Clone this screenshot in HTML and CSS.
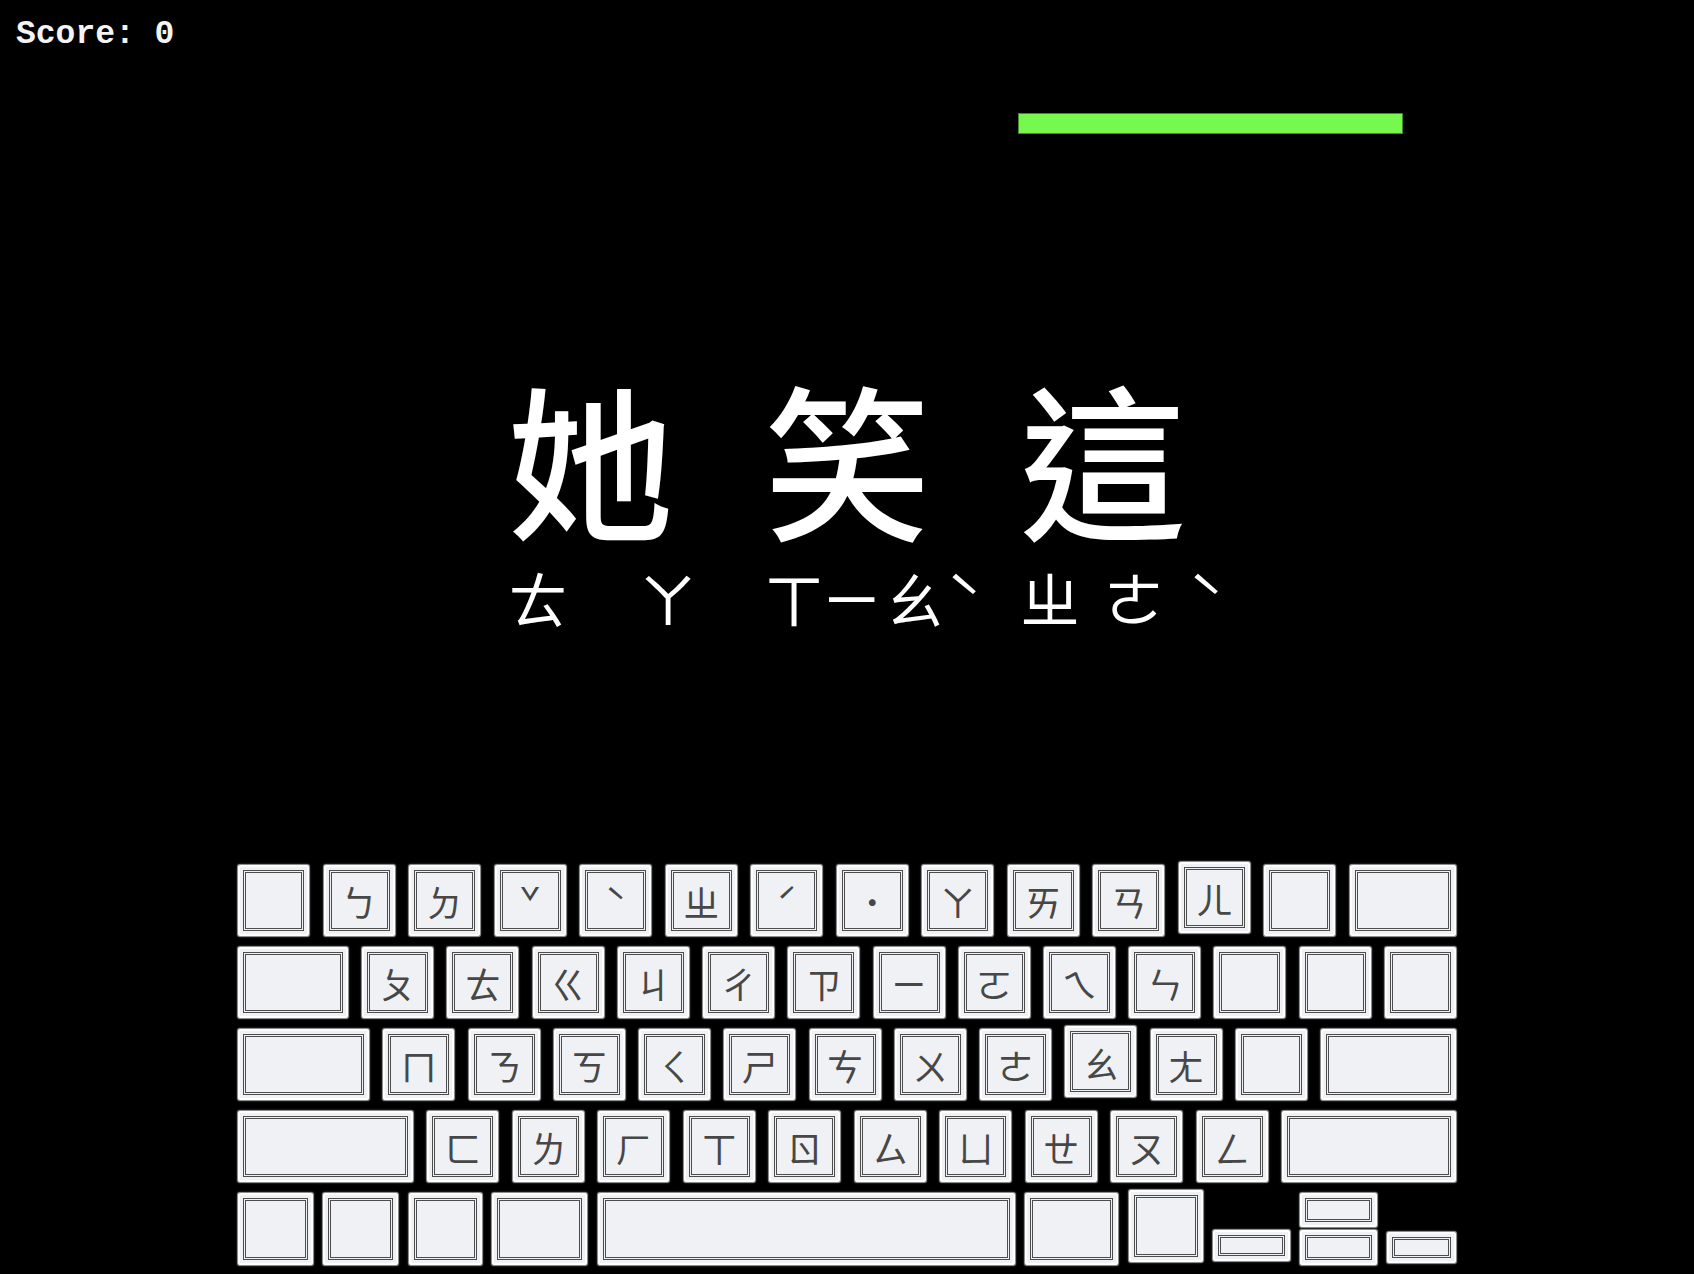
FILE: index.html
```html
<!DOCTYPE html>
<html lang="zh-Hant">
<head>
<meta charset="utf-8">
<title>注音打字</title>
<link rel="stylesheet" href="styles.css">
</head>
<body>
<div class="score">Score: 0</div>
<div class="timer-row"><div class="timer"></div></div>

<main class="word">
  <div class="syl">
    <div class="han">她</div>
    <div class="bpmf"><span class="bp">ㄊ</span><span class="sp-wide"></span><span class="bp">ㄚ</span></div>
  </div>
  <div class="syl">
    <div class="han">笑</div>
    <div class="bpmf"><span class="bp narrow">ㄒ</span><span class="bp">ㄧ</span><span class="bp">ㄠ</span><span class="bp tone">ˋ</span></div>
  </div>
  <div class="syl">
    <div class="han">這</div>
    <div class="bpmf"><span class="bp">ㄓ</span><span class="sp-half"></span><span class="bp">ㄜ</span><span class="sp-half"></span><span class="bp tone">ˋ</span></div>
  </div>
</main>

<section class="keyboard">
  <div class="row">
    <div class="key k"><span class="cap"></span></div>
    <div class="key k"><span class="cap">ㄅ</span></div>
    <div class="key k"><span class="cap">ㄉ</span></div>
    <div class="key k"><span class="cap">ˇ</span></div>
    <div class="key k"><span class="cap">ˋ</span></div>
    <div class="key k"><span class="cap">ㄓ</span></div>
    <div class="key k"><span class="cap">ˊ</span></div>
    <div class="key k"><span class="cap">˙</span></div>
    <div class="key k"><span class="cap">ㄚ</span></div>
    <div class="key k"><span class="cap">ㄞ</span></div>
    <div class="key k"><span class="cap">ㄢ</span></div>
    <div class="key k raised"><span class="cap">ㄦ</span></div>
    <div class="key k"><span class="cap"></span></div>
    <div class="key k-del"><span class="cap"></span></div>
  </div>
  <div class="row">
    <div class="key k-tab"><span class="cap"></span></div>
    <div class="key k"><span class="cap">ㄆ</span></div>
    <div class="key k"><span class="cap">ㄊ</span></div>
    <div class="key k"><span class="cap">ㄍ</span></div>
    <div class="key k"><span class="cap">ㄐ</span></div>
    <div class="key k"><span class="cap">ㄔ</span></div>
    <div class="key k"><span class="cap">ㄗ</span></div>
    <div class="key k"><span class="cap">ㄧ</span></div>
    <div class="key k"><span class="cap">ㄛ</span></div>
    <div class="key k"><span class="cap">ㄟ</span></div>
    <div class="key k"><span class="cap">ㄣ</span></div>
    <div class="key k"><span class="cap"></span></div>
    <div class="key k"><span class="cap"></span></div>
    <div class="key k"><span class="cap"></span></div>
  </div>
  <div class="row">
    <div class="key k-caps"><span class="cap"></span></div>
    <div class="key k"><span class="cap">ㄇ</span></div>
    <div class="key k"><span class="cap">ㄋ</span></div>
    <div class="key k"><span class="cap">ㄎ</span></div>
    <div class="key k"><span class="cap">ㄑ</span></div>
    <div class="key k"><span class="cap">ㄕ</span></div>
    <div class="key k"><span class="cap">ㄘ</span></div>
    <div class="key k"><span class="cap">ㄨ</span></div>
    <div class="key k"><span class="cap">ㄜ</span></div>
    <div class="key k raised"><span class="cap">ㄠ</span></div>
    <div class="key k"><span class="cap">ㄤ</span></div>
    <div class="key k"><span class="cap"></span></div>
    <div class="key k-enter"><span class="cap"></span></div>
  </div>
  <div class="row">
    <div class="key k-shift"><span class="cap"></span></div>
    <div class="key k"><span class="cap">ㄈ</span></div>
    <div class="key k"><span class="cap">ㄌ</span></div>
    <div class="key k"><span class="cap">ㄏ</span></div>
    <div class="key k"><span class="cap">ㄒ</span></div>
    <div class="key k"><span class="cap">ㄖ</span></div>
    <div class="key k"><span class="cap">ㄙ</span></div>
    <div class="key k"><span class="cap">ㄩ</span></div>
    <div class="key k"><span class="cap">ㄝ</span></div>
    <div class="key k"><span class="cap">ㄡ</span></div>
    <div class="key k"><span class="cap">ㄥ</span></div>
    <div class="key k-rshift"><span class="cap"></span></div>
  </div>
  <div class="row row-bottom">
    <div class="key k-fn"><span class="cap"></span></div>
    <div class="key k-fn"><span class="cap"></span></div>
    <div class="key k-ctl"><span class="cap"></span></div>
    <div class="key k-cmd"><span class="cap"></span></div>
    <div class="key k-space"><span class="cap"></span></div>
    <div class="key k-cmd2"><span class="cap"></span></div>
    <div class="key k-opt raised"><span class="cap"></span></div>
    <div class="arrows">
      <div class="key arrow arrow-lr"><span class="cap"></span></div>
      <div class="arrow-col">
        <div class="key arrow arrow-up"><span class="cap"></span></div>
        <div class="key arrow arrow-down"><span class="cap"></span></div>
      </div>
      <div class="key arrow arrow-r"><span class="cap"></span></div>
    </div>
  </div>
</section>
</body>
</html>
```

FILE: styles.css
```css
html, body {
  margin: 0;
  padding: 0;
  background: #000;
}

body {
  width: 1694px;
  min-height: 1274px;
  color: #fff;
  font-family: "Noto Sans CJK TC", "Noto Sans", sans-serif;
  overflow: hidden;
}

.score {
  font-family: "Liberation Mono", "DejaVu Sans Mono", monospace;
  font-weight: bold;
  font-size: 33px;
  line-height: 40px;
  padding: 15px 0 0 16px;
  height: 40px;
  color: #f4f4f4;
}

.timer-row {
  padding-top: 58px;
  padding-left: 1018px;
}

.timer {
  width: 385px;
  height: 21px;
  box-sizing: border-box;
  background: #77f84e;
  border: 1px solid #3f8a2c;
}

.word {
  display: flex;
  justify-content: center;
  gap: 90px;
  margin-top: 242px;
}

.syl {
  width: 166px;
  display: flex;
  flex-direction: column;
  align-items: flex-start;
}

.han {
  font-size: 166px;
  line-height: 160px;
  font-weight: 500;
  height: 160px;
  white-space: nowrap;
}

.bpmf {
  display: flex;
  white-space: nowrap;
  font-size: 60px;
  line-height: 72px;
  margin-top: 25px;
  margin-left: 0;
  font-weight: 400;
}

.bp {
  display: inline-block;
  width: 62px;
}

.bp.narrow {
  width: 58px;
}

.bp.tone {
  width: 40px;
}

.sp-wide {
  display: inline-block;
  width: 68px;
}

.sp-half {
  display: inline-block;
  width: 22px;
}

/* Keyboard */
.keyboard {
  width: 1218px;
  margin: 232px auto 0;
  display: flex;
  flex-direction: column;
  gap: 11px;
}

.row {
  display: flex;
  justify-content: space-between;
  align-items: flex-start;
}

.key {
  box-sizing: border-box;
  height: 71px;
  background: #f0f1f5;
  border: 2px solid #fdfdfd;
  box-shadow: 0 0 0 1px #8c8c8c, 0 0 2px 1px #555;
  padding: 3px;
  border-radius: 2px;
  display: flex;
}

.cap {
  box-sizing: border-box;
  flex: 1;
  border: 3px double #4d4d4d;
  display: flex;
  align-items: center;
  justify-content: center;
  color: #474747;
  font-family: "Noto Sans CJK TC", "Noto Sans", sans-serif;
  font-size: 36px;
  font-weight: 400;
  line-height: 1;
}

.raised {
  margin-top: -3px;
}

.k { width: 71px; }
.k-del { width: 106px; }
.k-tab { width: 110px; }
.k-caps { width: 131px; }
.k-enter { width: 135px; }
.k-shift { width: 175px; }
.k-rshift { width: 174px; }

.row-bottom .key { height: 72px; }
.k-fn { width: 75px; }
.k-ctl { width: 73px; }
.k-cmd { width: 95px; }
.k-space { width: 417px; }
.k-cmd2 { width: 93px; }
.k-opt { width: 74px; }

.arrows {
  display: flex;
  align-items: flex-end;
  gap: 10px;
  height: 72px;
}

.arrow-col {
  display: flex;
  flex-direction: column;
  gap: 3px;
}

.row-bottom .arrow {
  padding: 3px;
}

.row-bottom .arrow-lr { width: 77px; height: 31px; margin-bottom: 4px; }
.row-bottom .arrow-up { width: 77px; height: 34px; }
.row-bottom .arrow-down { width: 77px; height: 35px; }
.row-bottom .arrow-r { width: 69px; height: 31px; margin-bottom: 2px; }
```
